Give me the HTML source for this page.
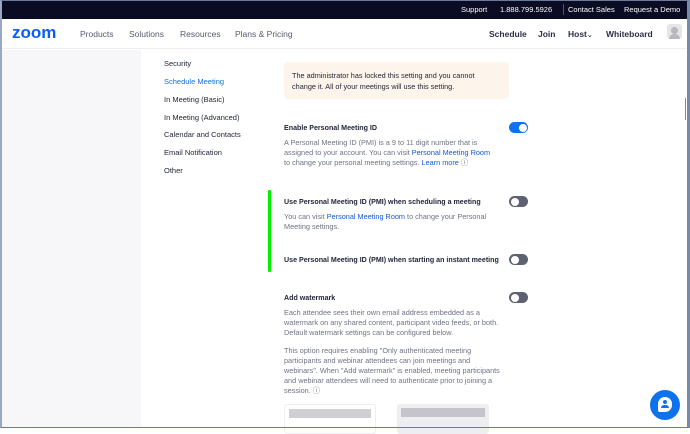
<!DOCTYPE html>
<html><head><style>
*{margin:0;padding:0;box-sizing:border-box}
body{width:690px;height:428px;overflow:hidden;font-family:"Liberation Sans",sans-serif;background:#fff;position:relative}
.frame{position:absolute;inset:0;border:1px solid #6b7a99;border-right:3px solid #7a89a8;border-left:2px solid #9aa8c8;pointer-events:none;z-index:9}
.top{position:absolute;left:0;top:0;width:690px;height:19px;background:#0b0c24;color:#fff;font-size:7.5px}
.top span{position:absolute;top:5px}
.nav{position:absolute;left:0;top:19px;width:690px;height:30px;background:#fff;border-bottom:1px solid #eceef2}
.nav span{position:absolute;top:10px;font-size:8.5px;color:#555a6e}
.nav b{position:absolute;top:10px;font-size:8.5px;color:#2a2f45}
.logo{position:absolute;left:12px;top:4px;font-size:17px;font-weight:bold;color:#0b5cff;letter-spacing:0px}
.side{position:absolute;left:0;top:50px;width:141px;height:378px;background:#f7f7f9}
.menu div{position:absolute;left:164px;font-size:7.5px;color:#22263a}
.t{position:absolute;font-size:7.1px;color:#22263a;font-weight:bold}
.d{position:absolute;font-size:7.3px;color:#6e7385;line-height:10px;width:212px}
.d a{color:#0e5bd8;text-decoration:none}
.tog{position:absolute;width:19px;height:11px;border-radius:6px;background:#5d6272}
.tog:after{content:"";position:absolute;left:1.5px;top:1.5px;width:8px;height:8px;border-radius:50%;background:#fff}
.tog.on{background:#0e72ed}.tog.on:after{left:9.5px}
</style></head><body>
<div class="top">
<span style="left:461px">Support</span><span style="left:500px">1.888.799.5926</span>
<span style="left:563px;top:4px;width:1px;height:11px;background:#555"></span>
<span style="left:568px">Contact Sales</span><span style="left:624px">Request a Demo</span>
</div>
<div class="nav">
<div class="logo">zoom</div>
<span style="left:80px">Products</span><span style="left:129px">Solutions</span><span style="left:180px">Resources</span><span style="left:235px">Plans &amp; Pricing</span>
<b style="left:489px">Schedule</b><b style="left:538px">Join</b><b style="left:568px">Host<span style="position:static;font-size:7px">⌄</span></b><b style="left:606px">Whiteboard</b>
<div style="position:absolute;left:667px;top:5px;width:15px;height:15px;border-radius:3px;background:#e5e5e8;overflow:hidden"><div style="position:absolute;left:4px;top:3px;width:7px;height:7px;border-radius:50%;background:#b8b8bc"></div><div style="position:absolute;left:2px;top:10px;width:11px;height:8px;border-radius:5px 5px 0 0;background:#b8b8bc"></div></div>
</div>
<div class="side"></div>
<div class="menu">
<div style="top:59px">Security</div>
<div style="top:77px;color:#0e72ed">Schedule Meeting</div>
<div style="top:95px">In Meeting (Basic)</div>
<div style="top:113px">In Meeting (Advanced)</div>
<div style="top:130px">Calendar and Contacts</div>
<div style="top:148px">Email Notification</div>
<div style="top:166px">Other</div>
</div>
<div style="position:absolute;left:284px;top:62px;width:225px;height:37px;background:#fdf5ec;border-radius:4px"></div>
<div class="t" style="left:292px;top:70px;font-weight:normal;color:#1f2233;line-height:11px;width:195px;font-size:7.3px">The administrator has locked this setting and you cannot change it. All of your meetings will use this setting.</div>
<div class="t" style="left:284px;top:124px">Enable Personal Meeting ID</div>
<div class="tog on" style="left:509px;top:122px"></div>
<div class="d" style="left:284px;top:138px">A Personal Meeting ID (PMI) is a 9 to 11 digit number that is assigned to your account. You can visit <a>Personal Meeting Room</a> to change your personal meeting settings. <a>Learn more</a> ⓘ</div>
<div style="position:absolute;left:268px;top:190px;width:3px;height:82px;background:#00f000;border-radius:1px"></div>
<div class="t" style="left:284px;top:198px">Use Personal Meeting ID (PMI) when scheduling a meeting</div>
<div class="tog" style="left:509px;top:196px"></div>
<div class="d" style="left:284px;top:212px">You can visit <a>Personal Meeting Room</a> to change your Personal Meeting settings.</div>
<div class="t" style="left:284px;top:256px">Use Personal Meeting ID (PMI) when starting an instant meeting</div>
<div class="tog" style="left:509px;top:254px"></div>
<div class="t" style="left:284px;top:294px">Add watermark</div>
<div class="tog" style="left:509px;top:292px"></div>
<div class="d" style="left:284px;top:308px;width:218px">Each attendee sees their own email address embedded as a watermark on any shared content, participant video feeds, or both. Default watermark settings can be configured below.</div>
<div class="d" style="left:284px;top:346px;width:222px">This option requires enabling "Only authenticated meeting participants and webinar attendees can join meetings and webinars". When "Add watermark" is enabled, meeting participants and webinar attendees will need to authenticate prior to joining a session. ⓘ</div>
<div style="position:absolute;left:284px;top:404px;width:92px;height:30px;border:1px solid #eee;border-radius:3px;padding:4px"><div style="height:9px;background:#d0d0d4"></div></div>
<div style="position:absolute;left:397px;top:404px;width:92px;height:30px;background:#ededf2;border-radius:3px;padding:4px"><div style="height:9px;background:#c4c4ca"></div></div>
<div style="position:absolute;left:685px;top:98px;width:1px;height:22px;background:#888"></div>
<div style="position:absolute;left:650px;top:390px;width:30px;height:30px;border-radius:50%;background:#0e72ed"><div style="position:absolute;left:8px;top:7px;width:14px;height:15px;border-radius:7px 7px 7px 2px;background:#fff"></div><div style="position:absolute;left:13px;top:10px;width:4px;height:4px;border-radius:50%;background:#0e72ed"></div><div style="position:absolute;left:11px;top:15px;width:8px;height:3px;border-radius:3px 3px 0 0;background:#0e72ed"></div></div>
<div class="frame"></div>
</body></html>
